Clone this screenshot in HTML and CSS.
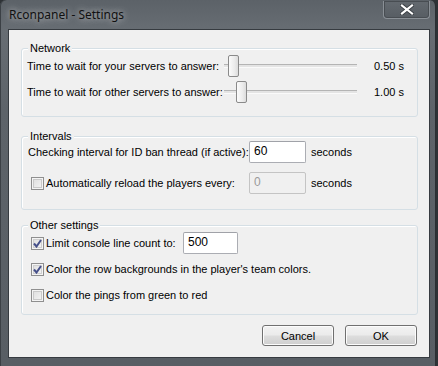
FILE: index.html
```html
<!DOCTYPE html>
<html>
<head>
<meta charset="utf-8">
<link rel="stylesheet" href="styles.css">
</head>
<body>
<div class="window">
  <div class="titlebar">
    <span class="title">Rconpanel - Settings</span>
    <div class="close">
      <svg width="14" height="11" viewBox="0 0 14 11"><path d="M2 1.5 L12 9.5 M12 1.5 L2 9.5" stroke="#3a3f44" stroke-width="4" stroke-linecap="square"/><path d="M2 1.5 L12 9.5 M12 1.5 L2 9.5" stroke="#ffffff" stroke-width="2.2" stroke-linecap="square"/></svg>
    </div>
  </div>
  <div class="client">
    <div class="group g1">
      <span class="legend">Network</span>
      <div class="row srow">
        <span class="slabel">Time to wait for your servers to answer:</span>
        <div class="slider"><div class="track"></div><div class="thumb" style="left:4px"></div></div>
        <span class="value">0.50 s</span>
      </div>
      <div class="row srow">
        <span class="slabel">Time to wait for other servers to answer:</span>
        <div class="slider"><div class="track"></div><div class="thumb" style="left:12px"></div></div>
        <span class="value">1.00 s</span>
      </div>
    </div>
    <div class="group g2">
      <span class="legend">Intervals</span>
      <div class="row irow">
        <span class="ilabel">Checking interval for ID ban thread (if active):</span>
        <div class="input">60</div>
        <span class="unit">seconds</span>
      </div>
      <div class="row irow">
        <span class="check"></span>
        <span class="clabel">Automatically reload the players every:</span>
        <div class="input disabled">0</div>
        <span class="unit">seconds</span>
      </div>
    </div>
    <div class="group g3">
      <span class="legend">Other settings</span>
      <div class="row crow">
        <span class="check checked"><svg width="9" height="9" viewBox="0 0 9 9"><path d="M1 4.5 L3.5 7.5 L8 1" fill="none" stroke="#46508a" stroke-width="2"/></svg></span>
        <span class="clabel wide">Limit console line count to:</span>
        <div class="input small">500</div>
      </div>
      <div class="row crow">
        <span class="check checked"><svg width="9" height="9" viewBox="0 0 9 9"><path d="M1 4.5 L3.5 7.5 L8 1" fill="none" stroke="#46508a" stroke-width="2"/></svg></span>
        <span class="clabel">Color the row backgrounds in the player's team colors.</span>
      </div>
      <div class="row crow">
        <span class="check"></span>
        <span class="clabel">Color the pings from green to red</span>
      </div>
    </div>
    <div class="buttons">
      <button class="btn">Cancel</button>
      <button class="btn">OK</button>
    </div>
  </div>
</div>
</body>
</html>
```
FILE: styles.css
```css
html, body {
  margin: 0;
  padding: 0;
  width: 438px;
  height: 366px;
  overflow: hidden;
  background: #2e3236;
}
.window {
  box-sizing: border-box;
  width: 436px;
  height: 366px;
  padding: 0 5px 8px 8px;
  display: flex;
  flex-direction: column;
  background: linear-gradient(180deg, #5c6268 0%, #676d73 8%, #5d6369 30%, #585e64 100%);
  border-right: 1px solid #2b2f33;
  box-shadow: inset 1px 0 0 #3b4045;
  border-radius: 6px 6px 0 0;
  font-family: "Liberation Sans", Arial, sans-serif;
  font-size: 11px;
  color: #000;
}
.titlebar {
  height: 29px;
  flex: none;
  display: flex;
  justify-content: space-between;
  align-items: flex-start;
}
.title {
  margin-top: 7px;
  margin-left: 1px;
  font-family: "Noto Sans", "Open Sans", sans-serif;
  font-size: 12px;
  line-height: 16px;
  color: #111;
  text-shadow: 0 0 6px rgba(255,255,255,0.55), 0 0 10px rgba(255,255,255,0.35);
}
.close {
  margin-top: 1px;
  width: 45px;
  height: 17px;
  border: 1px solid #8a9096;
  border-top: none;
  border-radius: 0 0 4px 4px;
  background: linear-gradient(180deg, #646a70, #575d63);
  box-shadow: inset 0 0 0 1px #484d52;
  display: flex;
  align-items: center;
  justify-content: center;
}
.client {
  flex: 1;
  background: #f0f0f0;
  border: 1px solid #363b40;
  display: flex;
  flex-direction: column;
}
.group {
  position: relative;
  border: 1px solid #d5dfe5;
  border-radius: 3px;
  margin: 0 11px 0 12px;
  box-shadow: inset 1px 1px 0 #fff;
}
.legend {
  position: absolute;
  top: -8px;
  left: 6px;
  padding: 0 2px;
  background: #f0f0f0;
  line-height: 14px;
}
.g1 { margin-top: 18px; padding: 6px 0 13px 5px; display: flex; flex-direction: column; gap: 4px; }
.g2 { margin-top: 19px; padding: 4px 0 15px 6px; display: flex; flex-direction: column; gap: 9px; }
.g3 { margin-top: 15px; padding: 6px 0 8px 6px; display: flex; flex-direction: column; gap: 4px; }
.row {
  display: flex;
  align-items: center;
  height: 22px;
}
.slabel { width: 197px; flex: none; white-space: nowrap; }
.slider {
  position: relative;
  width: 133px;
  height: 22px;
  flex: none;
}
.track {
  position: absolute;
  left: 0;
  right: 0;
  top: 9px;
  height: 2px;
  background: #e4e4e4;
  border-top: 1px solid #b4b4b4;
  border-bottom: 1px solid #fafafa;
}
.thumb {
  position: absolute;
  top: 0;
  width: 9px;
  height: 20px;
  border: 1px solid #8a8a8a;
  border-radius: 2px;
  background: linear-gradient(90deg, #fbfbfb 0%, #ececec 60%, #dcdcdc 100%);
}
.value { margin-left: 17px; }
.ilabel { width: 221px; flex: none; white-space: nowrap; }
.check {
  box-sizing: border-box;
  width: 13px;
  height: 13px;
  flex: none;
  margin-left: 3px;
  border: 1px solid #8f8f8f;
  background: linear-gradient(135deg, #dcdcdc, #f6f6f6);
  box-shadow: inset 0 0 0 1px #f4f4f4, inset 0 0 0 2px #c9c9c9;
  display: flex;
  align-items: center;
  justify-content: center;
}
.check.checked { box-shadow: inset 0 0 0 1px #f4f4f4, inset 0 0 0 2px #cfcfcf; }
.clabel { margin-left: 2px; white-space: nowrap; }
.g2 .clabel { width: 203px; flex: none; }
.clabel.wide { width: 137px; flex: none; }
.input {
  box-sizing: border-box;
  width: 57px;
  height: 22px;
  flex: none;
  background: #fff;
  border: 1px solid #abadb3;
  border-top-color: #a0a2a8;
  border-radius: 2px;
  padding: 2px 0 0 4px;
  line-height: 14px;
  font-size: 12px;
}
.input.disabled { background: #f0f0f0; color: #9a9a9a; border-color: #c4c4c4; }
.input.small { width: 55px; }
.unit { margin-left: 5px; }
.buttons {
  display: flex;
  justify-content: flex-end;
  gap: 11px;
  margin: 10px 12px 0 0;
}
.btn {
  box-sizing: border-box;
  width: 72px;
  height: 21px;
  margin: 0;
  padding: 0;
  font-family: "Liberation Sans", Arial, sans-serif;
  font-size: 11px;
  color: #000;
  border: 1px solid #707070;
  border-radius: 3px;
  background: linear-gradient(180deg, #f2f2f2 0%, #ebebeb 48%, #dddddd 52%, #cfcfcf 100%);
  box-shadow: inset 0 0 0 1px #fcfcfc;
}
```
